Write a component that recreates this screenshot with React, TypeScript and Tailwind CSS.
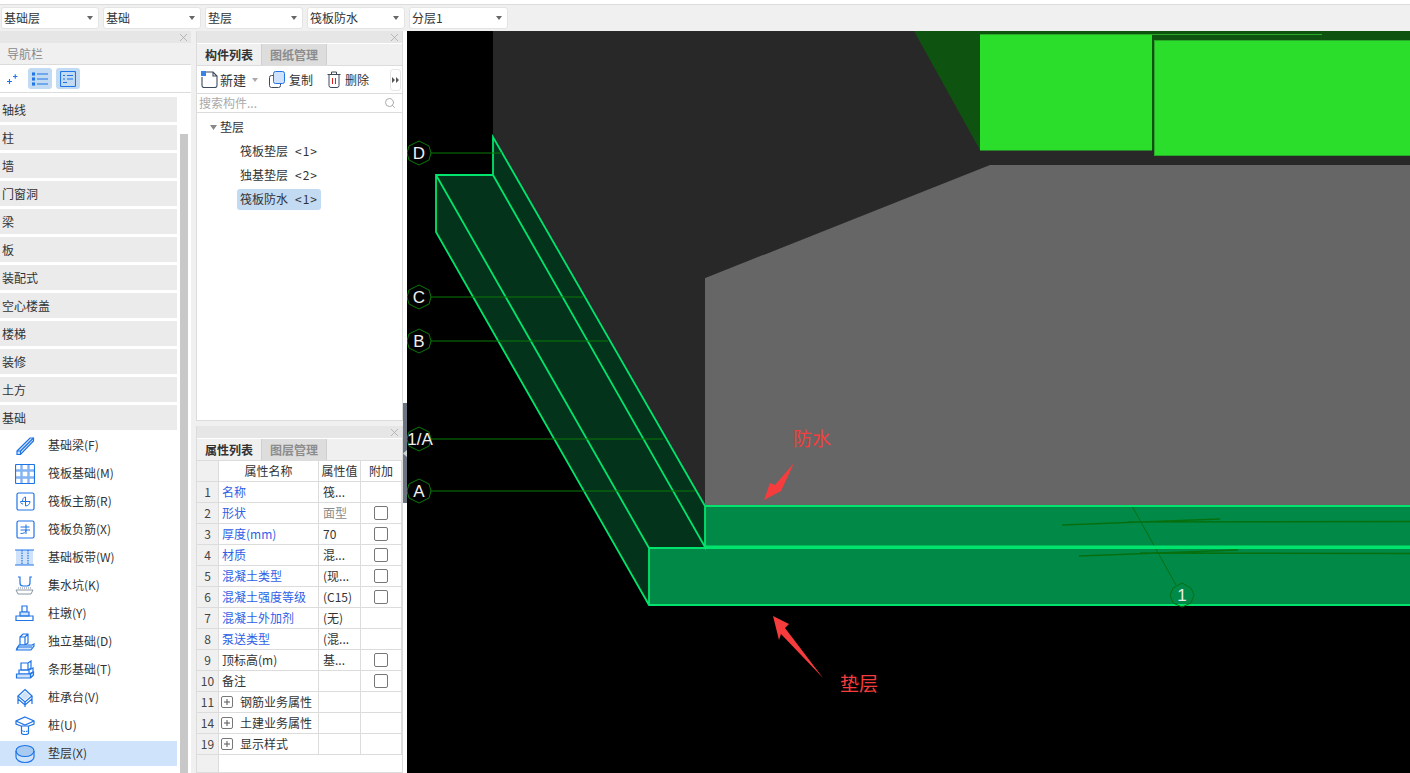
import React from 'react';
import { Search, X } from 'lucide-react';

const BLUE = '#1f74e6';
const FONT = 'font-["Noto_Sans_CJK_SC","Liberation_Sans",sans-serif]';

const selects = ['基础层', '基础', '垫层', '筏板防水', '分层1'];
const navItems = ['轴线', '柱', '墙', '门窗洞', '梁', '板', '装配式', '空心楼盖', '楼梯', '装修', '土方', '基础'];

// hand drawn icons for the foundation sub menu, 20x20 box
const Ico: React.FC<{ children: React.ReactNode }> = ({ children }) => (
    <svg width="20" height="20" viewBox="0 0 20 20" fill="none" stroke={BLUE} strokeWidth="1.200" className="shrink-0">
        {children}
    </svg>
);

const subItems: { label: string; icon: React.ReactNode }[] = [
    {
        label: '基础梁(F)',
        icon: (
            <Ico>
                <path d="M2 15 15 2h3.500v3L5.500 18.500H2z" fill="#cfe2fa" />
                <path d="M2 15h3.500v3.500M5.500 15 18.500 2" />
            </Ico>
        ),
    },
    {
        label: '筏板基础(M)',
        icon: (
            <Ico>
                <rect x="0.500" y="0.500" width="19" height="19" rx="1" />
                <path d="M1 6.500h18M1 13.500h18M6.500 1v18M13.500 1v18" strokeWidth="2.400" strokeOpacity="0.550" />
            </Ico>
        ),
    },
    {
        label: '筏板主筋(R)',
        icon: (
            <Ico>
                <rect x="2" y="1" width="17" height="17" rx="1.500" />
                <path d="M5.500 9.500h9.500M10.500 5v9M10.500 5c-2 0-3 2-3 4.500M15 9.500c0 2.500-2 4.500-4.500 4.500M5.500 9.500c0 1.500 1 2.500 2.500 2.500" strokeWidth="1" />
            </Ico>
        ),
    },
    {
        label: '筏板负筋(X)',
        icon: (
            <Ico>
                <rect x="2" y="1" width="17" height="17" rx="1.500" />
                <path d="M5.500 7h9M5.500 10h9.500M11 4.500v9.500M5.500 13.500c3 0 5.500-.5 5.500-3.500" strokeWidth="1" />
            </Ico>
        ),
    },
    {
        label: '基础板带(W)',
        icon: (
            <Ico>
                <rect x="1" y="2" width="17" height="15" fill="#cfe2fa" stroke="none" />
                <path d="M0 2h19M0 17h19" />
                <path d="M7 2v15M13 2v15" strokeDasharray="1.500 1" />
            </Ico>
        ),
    },
    {
        label: '集水坑(K)',
        icon: (
            <Ico>
                <path d="M3 1h2v6c0 2 1 3 3 3h4c2 0 3-1 3-3V1h2" />
                <path d="M1 14h17l-2 4H3z" stroke="#7d8a99" strokeWidth="0.900" />
                <path d="M3 12h13" stroke="#7d8a99" strokeDasharray="1 1" />
            </Ico>
        ),
    },
    {
        label: '柱墩(Y)',
        icon: (
            <Ico>
                <path d="M7 2h5v6H7z" />
                <path d="M5 8h9v4H5z" fill="#cfe2fa" />
                <path d="M1 12h17v4.500H1z" />
            </Ico>
        ),
    },
    {
        label: '独立基础(D)',
        icon: (
            <Ico>
                <path d="M5 5h5v8H5zM5 5l3-3h5v9l-3 2M10 5l3-3" />
                <path d="M4 13h13l2-1v2l-3 4H1.500z" fill="#cfe2fa" />
                <path d="M1.500 18l1-3h14.500" />
            </Ico>
        ),
    },
    {
        label: '条形基础(T)',
        icon: (
            <Ico>
                <path d="M6 3h7l3-2v7l-3 2H6zM13 3v7" />
                <path d="M4 10h10v4H4zM14 10l4-2v4l-4 2" />
                <path d="M1.500 14h14v4h-14zM15.500 14l3-2v3l-3 3" fill="#cfe2fa" />
            </Ico>
        ),
    },
    {
        label: '桩承台(V)',
        icon: (
            <Ico>
                <path d="M10 1.500 17 8l-7 6-7-6z" />
                <path d="M3 8v3l7 6 7-6V8M10 14v5M3 11v5M17 11v5" />
                <path d="M10 3.500 15 8 10 12 5 8z" fill="#cfe2fa" stroke="none" />
            </Ico>
        ),
    },
    {
        label: '桩(U)',
        icon: (
            <Ico>
                <path d="M10 1 19 5v3l-5 2H6L1 8V5z" />
                <path d="M1 5l9 4 9-4" />
                <path d="M6.500 10v7c0 2 7 2 7 0v-7" />
                <path d="M6.500 14c0 2 7 2 7 0" strokeDasharray="1.500 1" />
            </Ico>
        ),
    },
    {
        label: '垫层(X)',
        icon: (
            <Ico>
                <ellipse cx="10" cy="7" rx="9" ry="5.500" fill="#a9cbf2" />
                <path d="M1 7v6c0 3 4 5.500 9 5.500s9-2.500 9-5.500V7" />
            </Ico>
        ),
    },
];

const rows: { no: number; name: string; val?: string; gray?: boolean; blue?: boolean; check?: boolean; group?: boolean }[] = [
    { no: 1, name: '名称', val: '筏...', blue: true },
    { no: 2, name: '形状', val: '面型', gray: true, blue: true, check: true },
    { no: 3, name: '厚度(mm)', val: '70', blue: true, check: true },
    { no: 4, name: '材质', val: '混...', blue: true, check: true },
    { no: 5, name: '混凝土类型', val: '(现...', blue: true, check: true },
    { no: 6, name: '混凝土强度等级', val: '(C15)', blue: true, check: true },
    { no: 7, name: '混凝土外加剂', val: '(无)', blue: true },
    { no: 8, name: '泵送类型', val: '(混...', blue: true },
    { no: 9, name: '顶标高(m)', val: '基...', check: true },
    { no: 10, name: '备注', check: true },
    { no: 11, name: '钢筋业务属性', group: true },
    { no: 14, name: '土建业务属性', group: true },
    { no: 19, name: '显示样式', group: true },
];

const PanelHead = () => (
    <div className="h-3 bg-[#e6e6e6] flex items-center justify-end pr-[1px] shrink-0">
        <X className="w-[13px] h-[13px] text-[#a8a8a8]" strokeWidth={1.4} />
    </div>
);

const Tabs: React.FC<{ on: string; off: string }> = ({ on, off }) => (
    <div className="flex h-[22px] mt-px bg-[#f0f0f0] border-b border-[#dcdcdc] shrink-0">
        <div className="w-[64px] flex items-center justify-center font-bold text-[#333]">{on}</div>
        <div className="w-[66px] flex items-center justify-center font-bold text-[#8c8c8c] bg-[#dddddd] border-x border-[#cfcfcf]">{off}</div>
    </div>
);

const Nav = () => (
    <div className="w-[191px] shrink-0 flex flex-col bg-white">
        <PanelHead />
        <div className="h-[22px] bg-[#f0f0f0] border-b border-[#dcdcdc] pl-[7px] flex items-center text-[#8a8a8a]">导航栏</div>
        <div className="h-[28px] border-b border-[#dcdcdc] flex items-center pl-[6px]">
            <svg width="12" height="12" viewBox="0 0 12 12" stroke={BLUE} strokeWidth="1.100" className="mr-[10px] mt-px">
                <path d="M1 8.500h5M3.500 6v5M7 3.500h4.500M9.250 1.200v4.600" />
            </svg>
            <div className="w-6 h-[21px] rounded-[3px] bg-[#c3daf3] flex items-center justify-center">
                <svg width="16" height="14" viewBox="0 0 16 14" fill="none" stroke={BLUE} strokeWidth="1.100">
                    <rect x="0.500" y="1" width="2" height="2" />
                    <rect x="0.500" y="6" width="2" height="2" />
                    <rect x="0.500" y="11" width="2" height="2" />
                    <path d="M5 2h11M5 7h11M5 12h11" />
                </svg>
            </div>
            <div className="w-6 h-[21px] rounded-[3px] bg-[#c3daf3] flex items-center justify-center ml-1">
                <svg width="16" height="16" viewBox="0 0 16 16" fill="none" stroke={BLUE} strokeWidth="1.100">
                    <rect x="0.500" y="0.500" width="15" height="15" rx="1" />
                    <path d="M3 4.500h2M7 4.500h6M3 8h2M7 8h6M3 11.500h4" />
                </svg>
            </div>
        </div>
        <div className="flex flex-1 min-h-0 overflow-hidden">
            <div className="w-[177px] shrink-0 pt-1 flex flex-col gap-[3px]">
                {navItems.map((t) => (
                    <div key={t} className="h-[25px] shrink-0 bg-[#ebebeb] pl-[2px] flex items-center text-[#333]">{t}</div>
                ))}
                {subItems.map((s) => (
                    <div
                        key={s.label}
                        className={`h-[25px] shrink-0 pl-[15px] flex items-center gap-[13px] text-[#333] ${s.label === '垫层(X)' ? 'bg-[#cfe4fb]' : ''}`}
                    >
                        {s.icon}
                        <span className="-mt-px">{s.label}</span>
                    </div>
                ))}
            </div>
            <div className="w-2 ml-[3px] mt-[41px] bg-[#c8c8c8] shrink-0" />
        </div>
    </div>
);

const ListPanel = () => (
    <div className="h-[390px] shrink-0 flex flex-col bg-white border border-t-0 border-[#dcdcdc]">
        <PanelHead />
        <Tabs on="构件列表" off="图纸管理" />
        <div className="h-[28px] border-b border-[#dcdcdc] flex items-center pl-[4px] text-[#333] shrink-0">
            <svg width="17" height="17" viewBox="0 0 17 17" fill="none" stroke="#3f4a5a" strokeWidth="1.100">
                <path d="M5 1h7l4 4v9.500a2 2 0 0 1-2 2H3a2 2 0 0 1-2-2V6M12 1v4h4" />
                <rect x="0" y="0" width="5" height="5" fill="#3b82e8" stroke="none" />
            </svg>
            <span className="ml-[2px] text-[13px]">新建</span>
            <svg width="6" height="4" viewBox="0 0 6 4" fill="#aaa" className="ml-[6px]">
                <path d="M0 0h6L3 4z" />
            </svg>
            <svg width="16" height="17" viewBox="0 0 16 17" fill="none" className="ml-[11px]">
                <rect x="0.500" y="4.500" width="11" height="12" rx="2" stroke="#3f4a5a" />
                <rect x="4.500" y="0.500" width="11" height="12" rx="2" fill="#cfe2fa" stroke={BLUE} />
            </svg>
            <span className="ml-[4px]">复制</span>
            <svg width="14" height="17" viewBox="0 0 14 17" fill="none" stroke="#3f4a5a" className="ml-[14px]">
                <path d="M0.500 3.500h13M4.500 3.500V1h5v2.500M2 3.500v11a2 2 0 0 0 2 2h6a2 2 0 0 0 2-2v-11" />
                <path d="M5.500 7v6M8.500 7v6" stroke="#e02020" />
            </svg>
            <span className="ml-[4px]">删除</span>
            <div className="ml-auto mr-[1px] w-[11px] h-[22px] border border-[#e6e6e6] rounded-[3px] flex items-center justify-center">
                <svg width="7" height="6" viewBox="0 0 7 6" fill="#555">
                    <path d="M0 0l3 3-3 3zM4 0l3 3-3 3z" />
                </svg>
            </div>
        </div>
        <div className="h-[19px] border-b border-[#dcdcdc] flex items-center pl-[2px] pr-[6px] text-[#aaa] shrink-0">
            <span>搜索构件...</span>
            <Search className="w-3 h-3 ml-auto text-[#aaa]" strokeWidth={2} />
        </div>
        <div className="pt-[2px] pl-[13px] text-[#333]">
            <div className="h-6 flex items-center">
                <svg width="7" height="5" viewBox="0 0 7 5" fill="#888" className="mr-[3px]">
                    <path d="M0 0h7L3.500 5z" />
                </svg>
                垫层
            </div>
            {[
                ['筏板垫层', '<1>'],
                ['独基垫层', '<2>'],
                ['筏板防水', '<1>'],
            ].map(([name, count], i) => (
                <div key={name} className="h-6 flex items-center pl-[27px]">
                    <span className={`h-[21px] w-[84px] flex items-center pl-[3px] rounded-[3px] ${i === 2 ? 'bg-[#c3daf3]' : ''}`}>
                        {name}
                        <span className="ml-[7px] tracking-[1px]">{count}</span>
                    </span>
                </div>
            ))}
        </div>
    </div>
);

const cell = 'border-r border-b border-[#dcdcdc] flex items-center';

const PropPanel = () => (
    <div className="flex-1 min-h-0 mt-[5px] flex flex-col bg-white border border-t-0 border-[#dcdcdc]">
        <PanelHead />
        <Tabs on="属性列表" off="图层管理" />
        <div className="grid grid-cols-[22px_100px_42px_41px] auto-rows-[21px] text-[#333] shrink-0">
            <div className={`${cell} bg-[#f0f0f0]`} />
            <div className={`${cell} justify-center`}>属性名称</div>
            <div className={`${cell} justify-center`}>属性值</div>
            <div className={`${cell} justify-center`}>附加</div>
            {rows.map((r) => (
                <React.Fragment key={r.no}>
                    <div className={`${cell} justify-center bg-[#f0f0f0] text-[#444]`}>{r.no}</div>
                    {r.group ? (
                        <div className={`${cell} pl-[2px] min-w-0`}>
                            <span className="w-3 h-3 border border-[#777] rounded-[2px] flex items-center justify-center mr-[7px] shrink-0">
                                <svg width="6" height="6" viewBox="0 0 6 6" stroke="#555"><path d="M0 3h6M3 0v6" /></svg>
                            </span>
                            <span className="whitespace-nowrap">{r.name}</span>
                        </div>
                    ) : (
                        <div className={`${cell} pl-[3px] whitespace-nowrap ${r.blue ? 'text-[#2f5fe6]' : ''}`}>{r.name}</div>
                    )}
                    <div className={`${cell} pl-[4px] whitespace-nowrap overflow-hidden ${r.gray ? 'text-[#8a8a8a]' : ''}`}>{r.val}</div>
                    <div className={`${cell} justify-center`}>
                        {r.check && <span className="w-[14px] h-[14px] border border-[#777] rounded-[2px] bg-white" />}
                    </div>
                </React.Fragment>
            ))}
        </div>
        <div className="w-[22px] flex-1 bg-[#f0f0f0] border-r border-[#dcdcdc]" />
    </div>
);

// the 3D model view, everything in it uses page coordinates
const Axis: React.FC<{ x: number; y: number; to: number; label: string }> = ({ x, y, to, label }) => (
    <g>
        <line x1={x + 12} y1={y} x2={to} y2={y} stroke="#0a7a0a" strokeWidth="1" />
        <polygon
            points={`${x},${y - 12} ${x + 10},${y - 7} ${x + 12},${y} ${x + 10},${y + 7} ${x},${y + 12} ${x - 10},${y + 7} ${x - 12},${y} ${x - 10},${y - 7}`}
            fill="none"
            stroke="#0a7a0a"
        />
        <text x={label === '1/A' ? x + 1 : x} y={y + 6} textAnchor="middle" fontSize="17" fill="#f0f0f0" fontFamily="Liberation Sans, sans-serif">
            {label}
        </text>
    </g>
);

const Canvas = () => (
    <div className="flex-1 min-w-0 bg-black">
        <svg width="1003" height="742" viewBox="407 31 1003 742" className="block">
            <polygon points="493,31 1410,31 1410,166 990,166 705,278 705,506 493,137" fill="#282828" />
            <polygon points="914,31 1410,31 1410,40 1154,40 1154,150 980,150" fill="#0f5310" />
            <rect x="980" y="34.500" width="172" height="116" fill="#2bde2b" />
            <line x1="980" y1="34.500" x2="1322" y2="34.500" stroke="#27a827" />
            <rect x="1154.500" y="40.500" width="256" height="115" fill="#2bde2b" stroke="#27a827" />
            <polygon points="990,165 1410,165 1410,506 705,506 705,278" fill="#666666" />

            <polygon points="493,137 705,506 705,547 493,175" fill="#03331a" />
            <polygon points="436,175 493,175 705,547 649,548 649,605 436,232" fill="#03331a" />

            <rect x="705" y="506" width="705" height="41" fill="#008947" />
            <rect x="649" y="548" width="761" height="57" fill="#008947" />

            <g stroke="#067010" strokeWidth="1.300" fill="none">
                <path d="M1062 525 1220 519M1128 522 1410 521.500M1079 556 1238 550M1140 553 1410 553.500" />
                <path d="M1132 506 1176 585" strokeWidth="1" />
            </g>

            <g stroke="#00e46d" strokeWidth="1.800" fill="none">
                <path d="M493 175V137L705 506V547L493 175H436V232L649 605H1410M436 175 649 548H1410M705 506H1410M705 546.500H1410M649 548V605" />
            </g>

            <Axis x={419} y={153} to={502} label="D" />
            <Axis x={419} y={297} to={583} label="C" />
            <Axis x={419} y={341} to={608} label="B" />
            <Axis x={419} y={439} to={663} label="1/A" />
            <Axis x={419} y={491} to={695} label="A" />

            <polygon points="1182,583 1191,588 1194,595 1191,603 1182,607 1173,603 1170,595 1173,588" fill="none" stroke="#067010" />
            <text x="1182" y="601" textAnchor="middle" fontSize="17" fill="#e6f0e6" fontFamily="Liberation Sans, sans-serif">1</text>

            <polygon points="794,463 781,491 764,500 770,483 775,485" fill="#f63c3c" />
            <polygon points="773,616 789,624 785,628 823,678 781,634 779,640" fill="#f63c3c" />
            <text x="793" y="446" fontSize="19" fill="#f63c3c" fontFamily="Noto Sans CJK SC, sans-serif">防水</text>
            <text x="840" y="691" fontSize="19" fill="#f63c3c" fontFamily="Noto Sans CJK SC, sans-serif">垫层</text>
        </svg>
    </div>
);

export default function App() {
    return (
        <div className={`w-[1410px] h-[773px] overflow-hidden flex flex-col bg-[#f0f0f0] text-[12px] ${FONT}`}>
            <div className="h-[31px] shrink-0 flex flex-col">
                <div className="h-[4px] bg-white border-b border-[#dcdcdc] box-content" />
                <div className="flex-1 flex items-center gap-1 pl-px">
                    {selects.map((s, i) => (
                        <div
                            key={s}
                            className={`${i === 4 ? 'w-[99px]' : 'w-[98px]'} h-[22px] bg-white rounded-[3px] border border-[#e4e4e4] flex items-center pl-[2px] pr-[5px] text-[#333]`}
                        >
                            {s}
                            <svg width="6" height="4" viewBox="0 0 6 4" fill="#666" className="ml-auto">
                                <path d="M0 0h6L3 4z" />
                            </svg>
                        </div>
                    ))}
                </div>
            </div>
            <div className="flex flex-1 min-h-0">
                <Nav />
                <div className="w-[5px] shrink-0" />
                <div className="w-[207px] shrink-0 flex flex-col">
                    <ListPanel />
                    <PropPanel />
                </div>
                <div className="w-1 shrink-0 bg-white">
                    <div className="mt-[372px] h-[100px] bg-[#6b7480] flex items-center justify-center">
                        <svg width="4" height="7" viewBox="0 0 4 7" fill="#cfd3d8"><path d="M4 0v7L0 3.500z" /></svg>
                    </div>
                </div>
                <Canvas />
            </div>
        </div>
    );
}
